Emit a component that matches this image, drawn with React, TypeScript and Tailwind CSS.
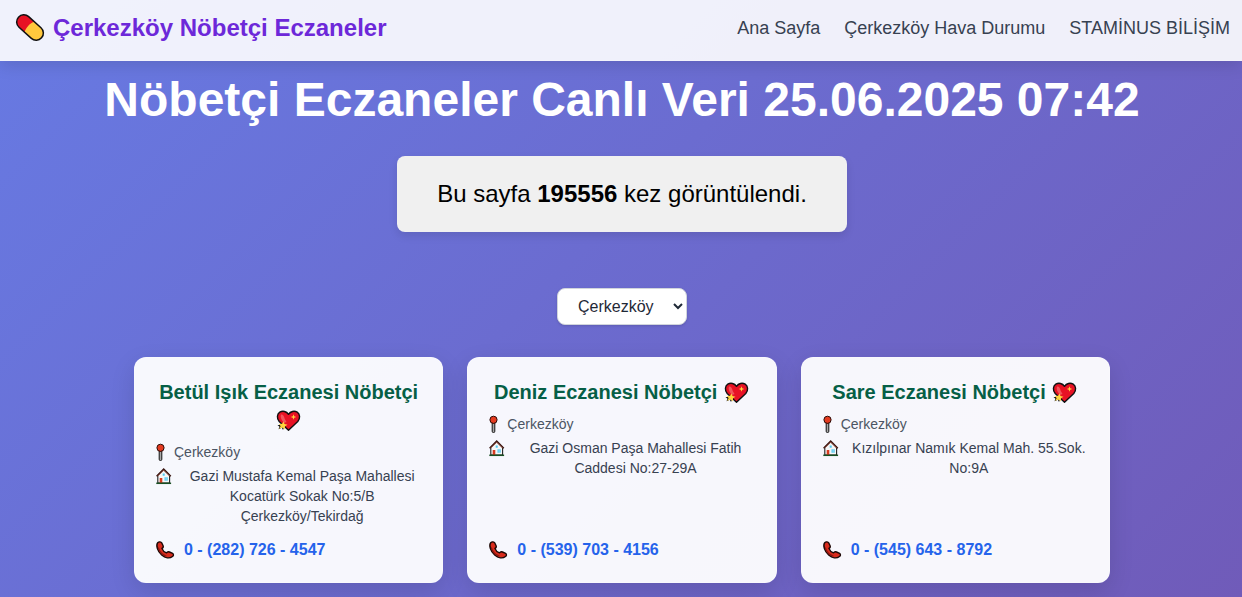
import { useState } from "react";

type Pharmacy = { name: string; district: string; address: string; phone: string };

const pharmacies: Pharmacy[] = [
  {
    name: "Betül Işık Eczanesi Nöbetçi",
    district: "Çerkezköy",
    address: "Gazi Mustafa Kemal Paşa Mahallesi Kocatürk Sokak No:5/B Çerkezköy/Tekirdağ",
    phone: "0 - (282) 726 - 4547",
  },
  {
    name: "Deniz Eczanesi Nöbetçi",
    district: "Çerkezköy",
    address: "Gazi Osman Paşa Mahallesi Fatih Caddesi No:27-29A",
    phone: "0 - (539) 703 - 4156",
  },
  {
    name: "Sare Eczanesi Nöbetçi",
    district: "Çerkezköy",
    address: "Kızılpınar Namık Kemal Mah. 55.Sok. No:9A",
    phone: "0 - (545) 643 - 8792",
  },
];

const links = ["Ana Sayfa", "Çerkezköy Hava Durumu", "STAMİNUS BİLİŞİM"];

function PillIcon() {
  return (
    <svg viewBox="0 0 34 32" className="h-8 w-[34px] shrink-0" aria-hidden="true">
      <g transform="translate(18 15.500) rotate(42)">
        <path d="M0 -7H-8.500A7 7 0 0 0 -8.500 7H0Z" fill="#e81224" />
        <path d="M-1 -7H8.500A7 7 0 0 1 8.500 7H-1C-3 3 -3 -3 -1 -7Z" fill="#ffc83d" />
        <rect x="-15.500" y="-7.200" width="31" height="14.400" rx="7.200" fill="none" stroke="#111" strokeWidth="1.500" />
      </g>
    </svg>
  );
}

function HeartIcon() {
  return (
    <svg viewBox="0 0 27 24" className="inline-block h-6 w-[27px] align-[-6px]" aria-hidden="true">
      <path
        d="M13.500 21.300 4.200 12.500C1.500 9.200 2 5 4.800 3.200 7.600 1.500 11.500 2.200 13.500 5.300 15.500 2.200 19.400 1.500 22.200 3.200 25 5 25.500 9.200 22.800 12.500Z"
        fill="#e81224"
        stroke="#111"
        strokeWidth="1.400"
        strokeLinejoin="round"
      />
      <path d="M6 5.500C7.500 5 9 6.500 9.300 8.500S11 11.500 11.500 13L9 14C7 11 5 9 6 5.500Z" fill="#f2545b" />
      <path d="m18.500 5.200.7 2.100 2.100.7-2.100.7-.7 2.100-.7-2.100-2.100-.7 2.100-.7Z" fill="#ffd53d" />
      <path d="m3.500 20.300 1-2.500-2-1.700 3 0 2.500 5 1.500-3.500" fill="#111" />
      <path d="m8.500 12.500 1 2.500 3 .8-2.500 1.500-.4 3.200-2-2-3.400 1.300 1.500-2.900-1.900-1.900 3.400-.2Z" fill="#ffd53d" />
    </svg>
  );
}

function PinIcon() {
  return (
    <svg viewBox="0 0 11 18" className="h-[18px] w-[11px] shrink-0" aria-hidden="true">
      <path d="M4.200 8h2.600v8.300a1.300 1.300 0 0 1-2.600 0Z" fill="#a8a8a8" stroke="#111" strokeWidth="1" />
      <circle cx="5.500" cy="4.800" r="3.600" fill="#e43b20" stroke="#2b0c08" strokeWidth="1" />
    </svg>
  );
}

function HouseIcon() {
  return (
    <svg viewBox="0 0 19 20" className="h-5 w-[19px] shrink-0" aria-hidden="true">
      <path d="M2.800 9.500 8.700 3.800 14.600 9.500V17H2.800Z" fill="#f6f6f6" stroke="#222" strokeWidth="1.100" />
      <path d="M1.600 10.300 8.700 3l7.100 7.300" fill="none" stroke="#3a1712" strokeWidth="1.500" />
      <path d="M2.800 10 8.700 4.100l5.900 5.900" fill="none" stroke="#d9705c" strokeWidth=".6" />
      <path d="M4.700 12h2.600v5H4.700Z" fill="#d83b20" />
      <path d="M9.500 11.300h3.200v3.500H9.500ZM7.700 7.500h2v2.300h-2Z" fill="#50c8ef" />
      <path d="M11.100 11.300v3.500" stroke="#f6f6f6" strokeWidth=".5" />
      <path d="M1.300 17.300h14.800" stroke="#174f22" strokeWidth="1.500" />
    </svg>
  );
}

function PhoneIcon() {
  return (
    <svg viewBox="0 0 21 20" className="h-5 w-[21px] shrink-0" aria-hidden="true">
      <path
        d="M2.700 2.800C3.900 1.400 6 1.600 6.900 3.200L8.100 5.700C8.600 7 8 7.900 6.900 8.400 7.600 10.500 9.300 12.100 11.500 12.900 12.200 11.800 13.300 11.500 14.500 12L17.600 13.400C18.800 14.100 18.700 15.700 17.500 16.500 14.600 18.700 10.200 18.200 6.700 15.100 2.600 11.400.6 5.400 2.700 2.800Z"
        fill="#d92b1c"
        stroke="#1c0806"
        strokeWidth="1.400"
        strokeLinejoin="round"
      />
      <path d="M3.200 7.500C4.300 11.200 7.600 15 11.500 16.200" fill="none" stroke="#8c1710" strokeWidth="1.200" />
    </svg>
  );
}

function PharmacyCard({ pharmacy }: { pharmacy: Pharmacy }) {
  return (
    <article className="flex flex-col rounded-xl border border-white/20 bg-white/95 p-5 text-center shadow-[0_8px_24px_rgba(0,0,0,0.12)]">
      <h2 className="mb-2 text-xl font-bold text-[#065f46]">
        {pharmacy.name} <HeartIcon />
      </h2>
      <p className="mb-1 flex items-center gap-2 text-sm text-[#4b5563]">
        <PinIcon />
        {pharmacy.district}
      </p>
      <div className="mb-3 flex items-start gap-2 text-sm text-[#374151]">
        <HouseIcon />
        <p className="flex-1">{pharmacy.address}</p>
      </div>
      <a
        href={"tel:" + pharmacy.phone.replace(/\D/g, "")}
        className="mt-auto flex items-center gap-2 font-bold text-[#2563eb]"
      >
        <PhoneIcon />
        {pharmacy.phone}
      </a>
    </article>
  );
}

export default function App() {
  const [district, setDistrict] = useState("Çerkezköy");

  return (
    <div className="min-h-screen bg-[linear-gradient(135deg,#677ae3_0%,#705bb9_100%)] pb-3.5 font-['Liberation_Sans',Arial,sans-serif]">
      <header className="flex flex-wrap items-center justify-between border-b border-white/20 bg-white/90 px-3 pt-3 pb-4 shadow-[0_4px_16px_rgba(0,0,0,0.12)]">
        <a href="#" className="flex items-center gap-[7px] text-2xl font-bold text-[#6d28d9]">
          <PillIcon />
          Çerkezköy Nöbetçi Eczaneler
        </a>
        <nav className="flex flex-wrap gap-6 text-lg text-[#374151]">
          {links.map((link) => (
            <a key={link} href="#">
              {link}
            </a>
          ))}
        </nav>
      </header>

      <main className="flex flex-col items-center pt-[15px] pr-6 pl-[26px]">
        <h1 className="text-center text-5xl font-bold text-white">
          Nöbetçi Eczaneler Canlı Veri 25.06.2025 07:42
        </h1>
        <p className="mt-8 rounded-lg bg-[#f0f0f0] px-10 py-5 text-2xl/9 text-black shadow-[0_4px_8px_rgba(0,0,0,0.1)]">
          Bu sayfa <strong>195556</strong> kez görüntülendi.
        </p>
        <select
          aria-label="İlçe"
          value={district}
          onChange={(event) => setDistrict(event.target.value)}
          className="mt-14 h-[37px] w-[130px] rounded-lg border border-gray-300 bg-white pl-4 text-base text-[#1f2937] shadow-sm"
        >
          <option>Çerkezköy</option>
          <option>Çorlu</option>
          <option>Kapaklı</option>
        </select>
        <section className="mt-8 grid w-full max-w-[976px] gap-6 md:grid-cols-3">
          {pharmacies.map((pharmacy) => (
            <PharmacyCard key={pharmacy.phone} pharmacy={pharmacy} />
          ))}
        </section>
      </main>
    </div>
  );
}
